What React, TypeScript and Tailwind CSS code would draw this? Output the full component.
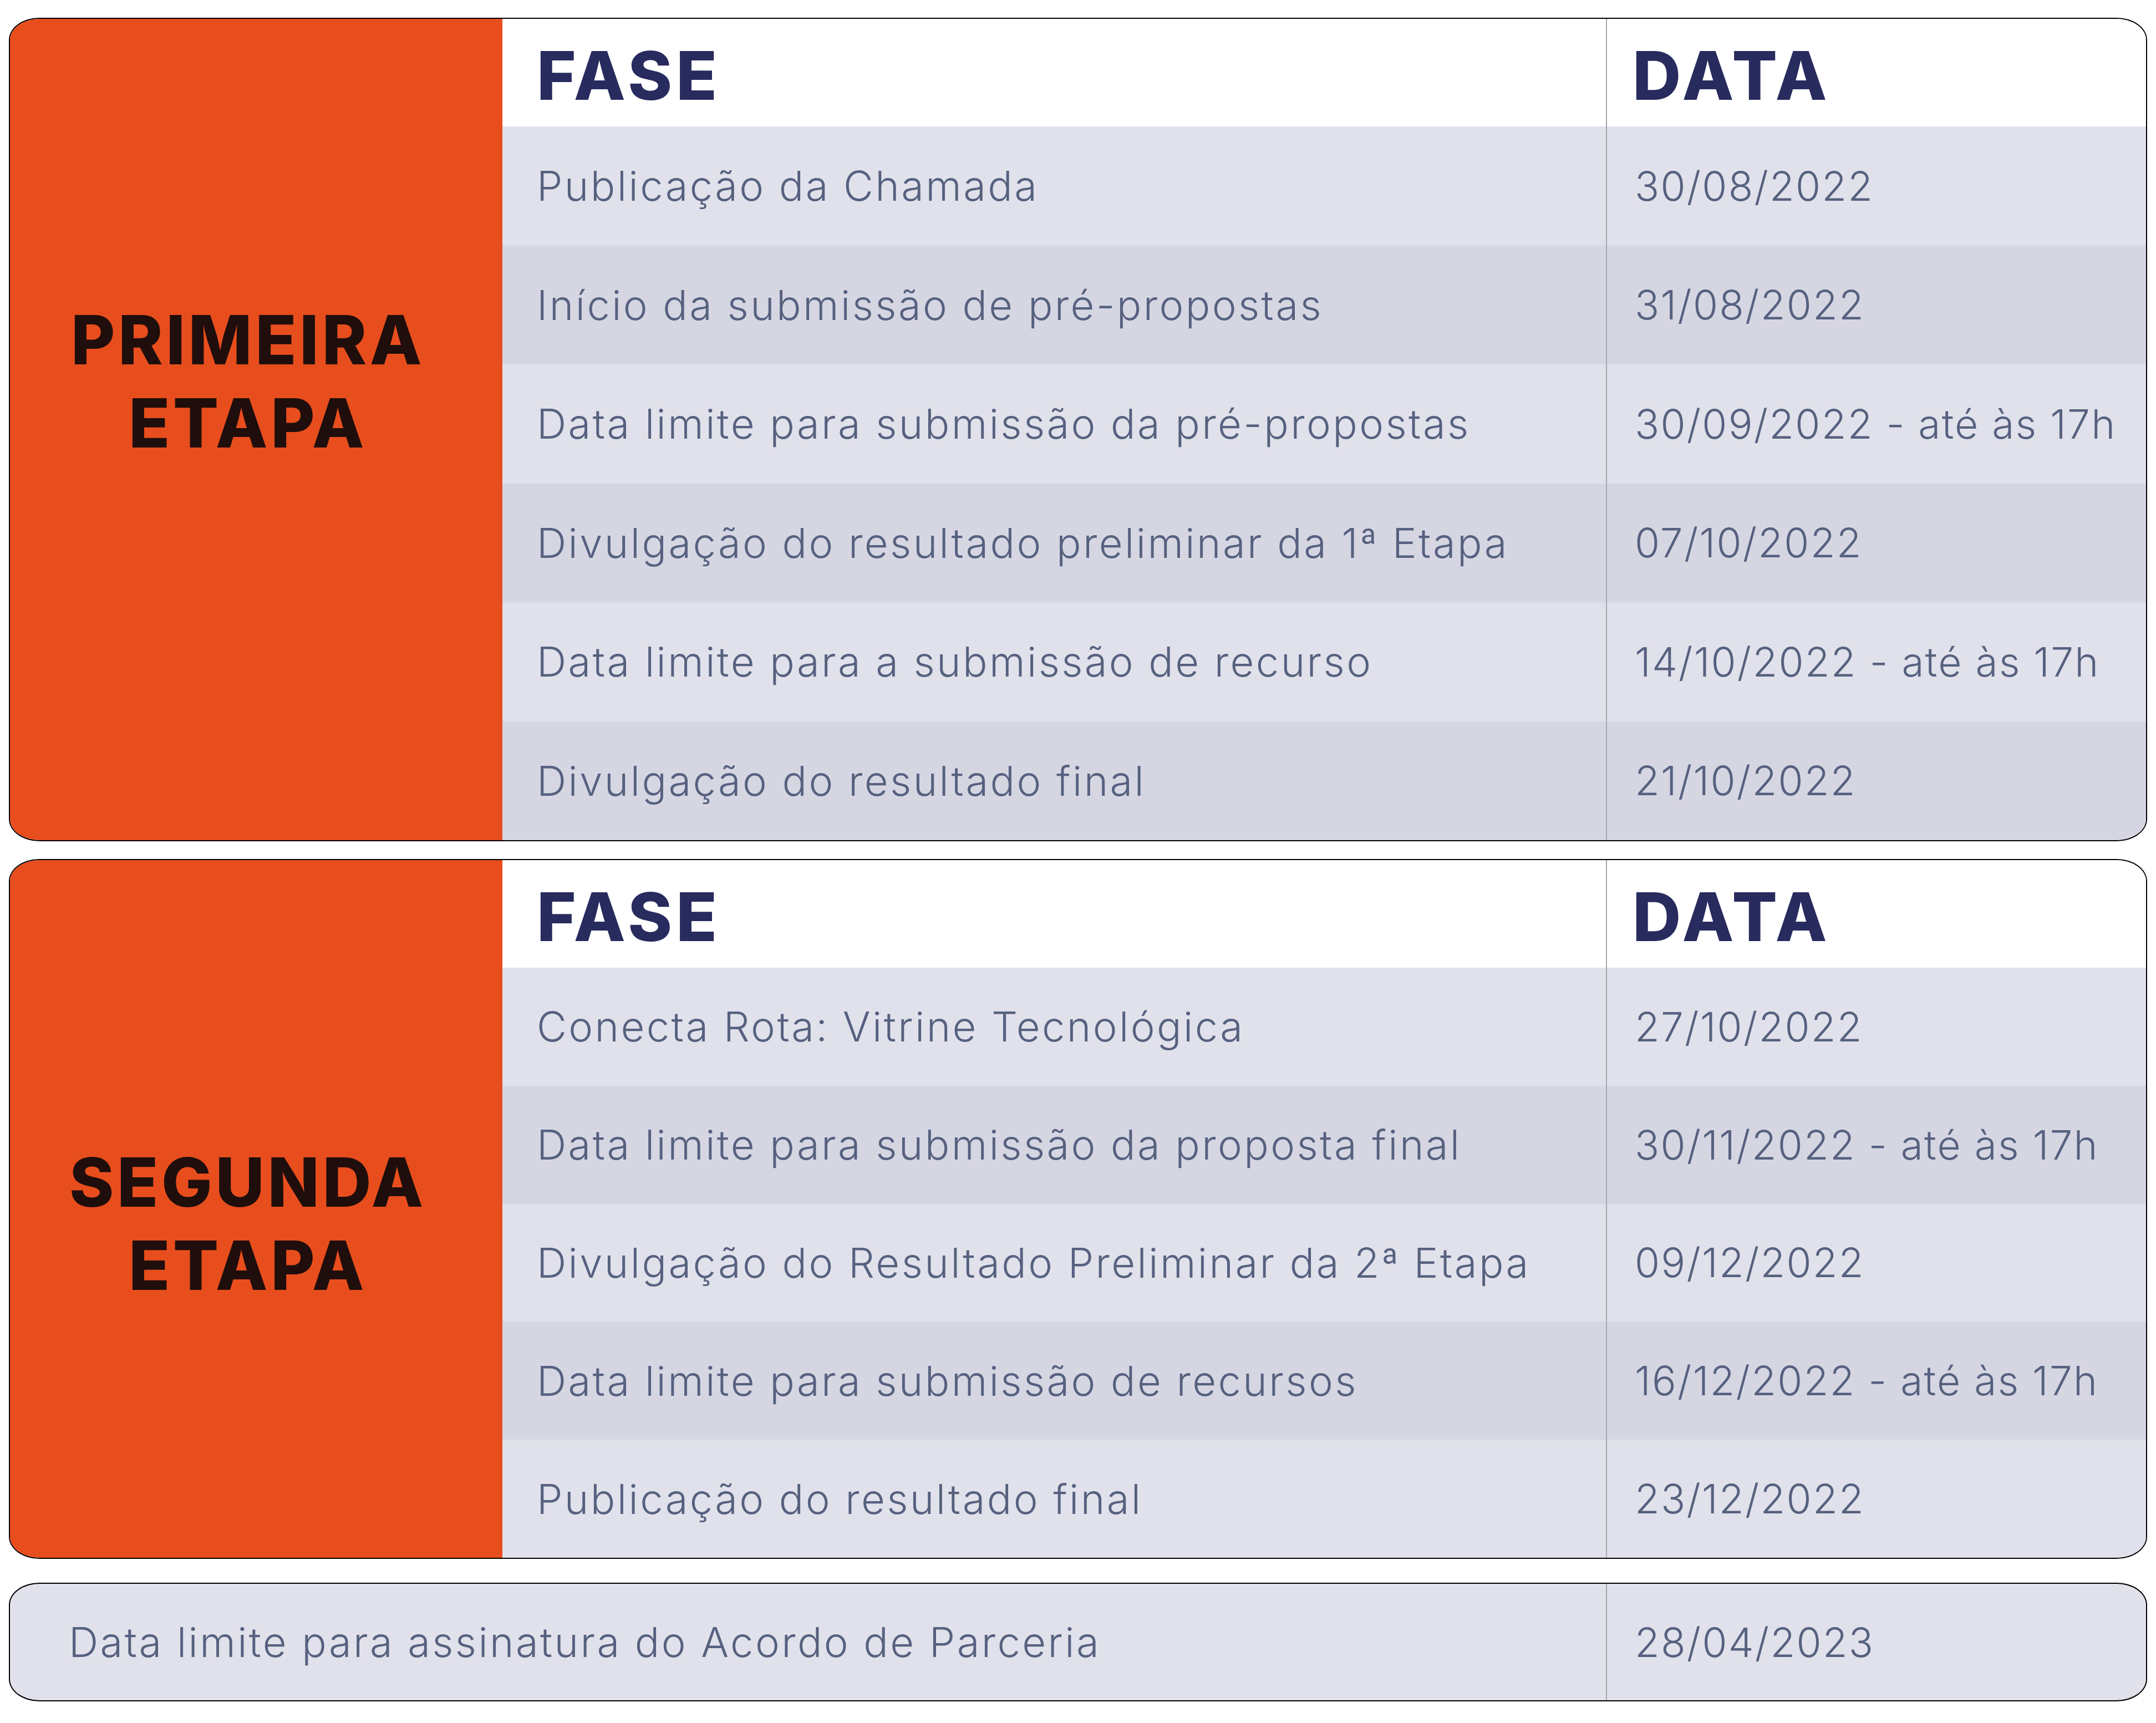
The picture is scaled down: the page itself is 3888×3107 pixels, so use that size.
import React from "react";

type Row = [string, string];

const rows1: Row[] = [
  ["Publicação da Chamada", "30/08/2022"],
  ["Início da submissão de pré-propostas", "31/08/2022"],
  ["Data limite para submissão da pré-propostas", "30/09/2022 - até às 17h"],
  ["Divulgação do resultado preliminar da 1ª Etapa", "07/10/2022"],
  ["Data limite para a submissão de recurso", "14/10/2022 - até às 17h"],
  ["Divulgação do resultado final", "21/10/2022"],
];

const rows2: Row[] = [
  ["Conecta Rota: Vitrine Tecnológica", "27/10/2022"],
  ["Data limite para submissão da proposta final", "30/11/2022 - até às 17h"],
  ["Divulgação do Resultado Preliminar da 2ª Etapa", "09/12/2022"],
  ["Data limite para submissão de recursos", "16/12/2022 - até às 17h"],
  ["Publicação do resultado final", "23/12/2022"],
];

const bodyFont = { fontFamily: "Inter, 'Open Sans', sans-serif" };

function Rows({ rows }: { rows: Row[] }) {
  return (
    <>
      {rows.map(([fase, data], i) => (
        <div
          key={fase}
          className={
            "flex-1 flex " + (i % 2 === 0 ? "bg-[#e1e1eb]" : "bg-[#d6d6e3]")
          }
        >
          <div className="w-[1990px] shrink-0 flex items-center pl-[62px] text-[74px] leading-none font-light text-[#56617f] tracking-[3.4px]">
            {fase}
          </div>
          <div className="flex-1 flex items-center border-l-2 border-[#a7a7b0] pl-[50px] text-[73px] leading-none font-light text-[#56617f] tracking-[2.2px]">
            {data}
          </div>
        </div>
      ))}
    </>
  );
}

function Header() {
  return (
    <div className="h-[194px] shrink-0 flex bg-white">
      <div className="w-[1990px] shrink-0 flex items-center pt-[10px] pl-[62px] text-[121px] leading-none font-extrabold text-[#282b5e] tracking-[7px]">
        FASE
      </div>
      <div className="flex-1 flex items-center pt-[10px] border-l-2 border-[#a7a7b0] pl-[46px] text-[121px] leading-none font-extrabold text-[#282b5e] tracking-[7.5px]">
        DATA
      </div>
    </div>
  );
}

export default function App() {
  return (
    <div
      className="w-[3888px] h-[3107px] bg-white pt-[32px] px-[16px] flex flex-col"
      style={bodyFont}
    >
      {/* Primeira etapa */}
      <div className="h-[1485px] shrink-0 flex border-2 border-black rounded-[55px/40px] overflow-hidden">
        <div className="w-[888px] shrink-0 bg-[#e84e1d] flex flex-col items-center justify-center pr-[30px] pb-[174px] text-[122px] leading-[150px] font-extrabold text-[#200e0c] text-center tracking-[5.5px]">
          <span>PRIMEIRA</span>
          <span>ETAPA</span>
        </div>
        <div className="flex-1 flex flex-col">
          <Header />
          <Rows rows={rows1} />
        </div>
      </div>

      {/* Segunda etapa */}
      <div className="mt-[32px] h-[1262px] shrink-0 flex border-2 border-black rounded-[55px/40px] overflow-hidden">
        <div className="w-[888px] shrink-0 bg-[#e84e1d] flex flex-col items-center justify-center pr-[30px] pt-[54px] text-[122px] leading-[150px] font-extrabold text-[#200e0c] text-center tracking-[5.5px]">
          <span>SEGUNDA</span>
          <span>ETAPA</span>
        </div>
        <div className="flex-1 flex flex-col">
          <Header />
          <Rows rows={rows2} />
        </div>
      </div>

      {/* Acordo de parceria */}
      <div className="mt-[43px] h-[214px] shrink-0 flex border-2 border-black rounded-[55px/40px] overflow-hidden bg-[#e1e1eb]">
        <div className="w-[2878px] shrink-0 flex items-center pl-[106px] text-[74px] leading-none font-light text-[#56617f] tracking-[3.4px]">
          Data limite para assinatura do Acordo de Parceria
        </div>
        <div className="flex-1 flex items-center border-l-2 border-[#a7a7b0] pl-[50px] text-[73px] leading-none font-light text-[#56617f] tracking-[2.2px]">
          28/04/2023
        </div>
      </div>
    </div>
  );
}
